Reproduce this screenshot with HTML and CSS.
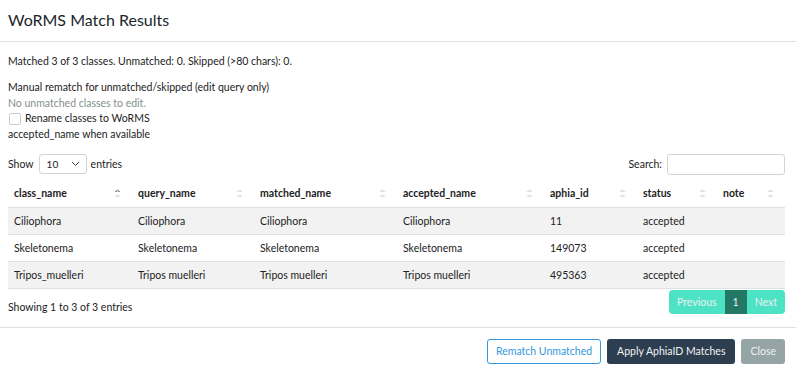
FILE: index.html
```html
<!DOCTYPE html>
<html lang="en">
<head>
    <meta charset="UTF-8">
    <title>WoRMS Match Results</title>
    <link rel="stylesheet" href="styles.css">
</head>
<body>
    <div class="modal">
        <header class="modal-header">
            <h4>WoRMS Match Results</h4>
        </header>
        <section class="modal-body">
            <p class="summary">Matched 3 of 3 classes. Unmatched: 0. Skipped (&gt;80 chars): 0.</p>
            <div class="rematch">
                <div>Manual rematch for unmatched/skipped (edit query only)</div>
                <div class="muted">No unmatched classes to edit.</div>
                <label class="check"><span class="box"></span>Rename classes to WoRMS</label>
                <div>accepted_name when available</div>
            </div>

            <div class="dt-top">
                <div class="length">Show <span class="select">10 <svg width="9" height="6" viewBox="0 0 9 6"><path d="M1 1l3.5 3.5L8 1" fill="none" stroke="#444" stroke-width="1"/></svg></span> entries</div>
                <div class="search">Search: <input type="text"></div>
            </div>

            <table class="results">
                <colgroup>
                    <col style="width:124px"><col style="width:122px"><col style="width:143px"><col style="width:147px"><col style="width:93px"><col style="width:80px"><col>
                </colgroup>
                <thead>
                    <tr>
                        <th class="sorted">class_name</th>
                        <th>query_name</th>
                        <th>matched_name</th>
                        <th>accepted_name</th>
                        <th>aphia_id</th>
                        <th>status</th>
                        <th>note</th>
                    </tr>
                </thead>
                <tbody>
                    <tr class="odd"><td>Ciliophora</td><td>Ciliophora</td><td>Ciliophora</td><td>Ciliophora</td><td>11</td><td>accepted</td><td></td></tr>
                    <tr><td>Skeletonema</td><td>Skeletonema</td><td>Skeletonema</td><td>Skeletonema</td><td>149073</td><td>accepted</td><td></td></tr>
                    <tr class="odd"><td>Tripos_muelleri</td><td>Tripos muelleri</td><td>Tripos muelleri</td><td>Tripos muelleri</td><td>495363</td><td>accepted</td><td></td></tr>
                </tbody>
            </table>

            <div class="dt-bottom">
                <div class="info">Showing 1 to 3 of 3 entries</div>
                <div class="pager">
                    <span class="page disabled">Previous</span>
                    <span class="page active">1</span>
                    <span class="page disabled">Next</span>
                </div>
            </div>
        </section>
        <footer class="modal-footer">
            <button class="btn btn-outline">Rematch Unmatched</button>
            <button class="btn btn-dark">Apply AphiaID Matches</button>
            <button class="btn btn-grey">Close</button>
        </footer>
    </div>
</body>
</html>
```

FILE: styles.css
```css
body {
    margin: 0;
    font-family: 'Lato', sans-serif;
    font-size: 10.5px;
    color: #222;
    background-color: white;
}
.modal-header {
    height: 41px;
    border-bottom: 1px solid #dee2e6;
    padding: 0 8px;
    display: flex;
    align-items: center;
}
.modal-header h4 {
    margin: 0 0 2px;
    font-size: 16px;
    font-weight: 400;
    color: #212529;
}
.modal-body {
    padding: 11px 11px 10px 8px;
}
.summary {
    margin: 0 0 11px;
    line-height: 16px;
}
.rematch {
    line-height: 15.7px;
}
.muted {
    color: #858f90;
}
.check {
    display: flex;
    align-items: center;
}
.box {
    width: 10px;
    height: 10px;
    border: 1px solid #ccc;
    border-radius: 2px;
    margin: 0 4px 0 1px;
}
.dt-top {
    display: flex;
    justify-content: space-between;
    align-items: center;
    margin-top: 11px;
}
.length, .search {
    display: flex;
    align-items: center;
}
.select {
    width: 48px;
    height: 20px;
    box-sizing: border-box;
    border: 1px solid #ced4da;
    border-radius: 3px;
    margin: 0 4px 0 5px;
    padding: 0 0 0 7px;
    display: flex;
    align-items: center;
    font-size: 10px;
}
.select svg {
    margin-left: 13px;
}
.search input {
    width: 118px;
    height: 21px;
    box-sizing: border-box;
    border: 1px solid #ced4da;
    border-radius: 3px;
    margin-left: 5px;
}
.results {
    width: 100%;
    border-collapse: collapse;
    table-layout: fixed;
    margin-top: 4px;
}
.results th {
    text-align: left;
    font-weight: 700;
    height: 28px;
    padding: 0 6px;
    border-bottom: 1px solid #dee2e6;
    position: relative;
}
.results th::after {
    content: "";
    position: absolute;
    right: 12px;
    top: 10px;
    width: 5px;
    height: 9px;
    background:
        linear-gradient(to bottom right, transparent 50%, #ddd 50%) left 0 top 0 / 2.5px 3px no-repeat,
        linear-gradient(to bottom left, transparent 50%, #ddd 50%) right 0 top 0 / 2.5px 3px no-repeat,
        linear-gradient(to top right, transparent 50%, #ddd 50%) left 0 bottom 0 / 2.5px 3px no-repeat,
        linear-gradient(to top left, transparent 50%, #ddd 50%) right 0 bottom 0 / 2.5px 3px no-repeat;
}
.results th.sorted::after {
    background:
        linear-gradient(to bottom right, transparent 50%, #999 50%) left 0 top 0 / 2.5px 3px no-repeat,
        linear-gradient(to bottom left, transparent 50%, #999 50%) right 0 top 0 / 2.5px 3px no-repeat,
        linear-gradient(to top right, transparent 50%, #ddd 50%) left 0 bottom 0 / 2.5px 3px no-repeat,
        linear-gradient(to top left, transparent 50%, #ddd 50%) right 0 bottom 0 / 2.5px 3px no-repeat;
}
.results td {
    height: 26px;
    padding: 0 6px;
    border-bottom: 1px solid #dee2e6;
}
.results tr.odd td {
    background-color: #f2f2f2;
}
.dt-bottom {
    display: flex;
    justify-content: space-between;
    align-items: center;
    margin-top: 1px;
}
.info {
    padding-top: 10px;
}
.pager {
    display: flex;
    border-radius: 4px;
    overflow: hidden;
}
.page {
    height: 24px;
    line-height: 24px;
    padding: 0 8px;
    background-color: #4be3c4;
    color: #ecf0f1;
}
.page.active {
    background-color: #227865;
    color: #eef;
}
.modal-footer {
    border-top: 1px solid #dee2e6;
    margin-top: 3px;
    padding: 11px 11px 8px;
    display: flex;
    justify-content: flex-end;
    gap: 6px;
}
.btn {
    font-family: 'Lato', sans-serif;
    font-size: 10.5px;
    height: 25px;
    padding: 0 8px;
    border-radius: 3px;
    border: 1px solid transparent;
}
.btn-outline {
    background-color: white;
    border-color: #3498db;
    color: #3498db;
}
.btn-dark {
    background-color: #2c3e50;
    color: #f2f2f2;
    padding: 0 9px;
}
.btn-grey {
    background-color: #95a5a6;
    color: #ecf0f1;
}
```
